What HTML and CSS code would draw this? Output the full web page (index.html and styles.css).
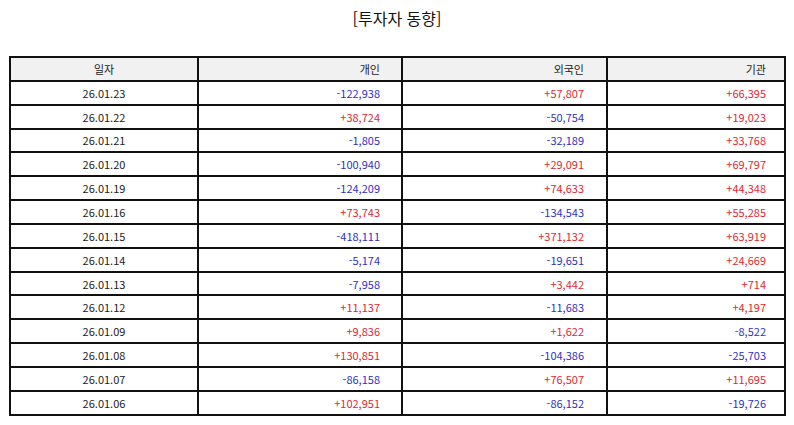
FILE: index.html
```html
<!DOCTYPE html>
<html lang="ko">
<head>
<meta charset="utf-8">
<link rel="stylesheet" href="styles.css">
</head>
<body>
<h1 class="title">[투자자 동향]</h1>
<table class="grid">
  <colgroup>
    <col class="c-date"><col class="c-ind"><col class="c-for"><col class="c-inst">
  </colgroup>
  <thead>
    <tr><th class="date">일자</th><th class="ind">개인</th><th class="for">외국인</th><th class="inst">기관</th></tr>
  </thead>
  <tbody>
    <tr><td class="date">26.01.23</td><td class="ind neg">-122,938</td><td class="for pos">+57,807</td><td class="inst pos">+66,395</td></tr>
    <tr><td class="date">26.01.22</td><td class="ind pos">+38,724</td><td class="for neg">-50,754</td><td class="inst pos">+19,023</td></tr>
    <tr><td class="date">26.01.21</td><td class="ind neg">-1,805</td><td class="for neg">-32,189</td><td class="inst pos">+33,768</td></tr>
    <tr><td class="date">26.01.20</td><td class="ind neg">-100,940</td><td class="for pos">+29,091</td><td class="inst pos">+69,797</td></tr>
    <tr><td class="date">26.01.19</td><td class="ind neg">-124,209</td><td class="for pos">+74,633</td><td class="inst pos">+44,348</td></tr>
    <tr><td class="date">26.01.16</td><td class="ind pos">+73,743</td><td class="for neg">-134,543</td><td class="inst pos">+55,285</td></tr>
    <tr><td class="date">26.01.15</td><td class="ind neg">-418,111</td><td class="for pos">+371,132</td><td class="inst pos">+63,919</td></tr>
    <tr><td class="date">26.01.14</td><td class="ind neg">-5,174</td><td class="for neg">-19,651</td><td class="inst pos">+24,669</td></tr>
    <tr><td class="date">26.01.13</td><td class="ind neg">-7,958</td><td class="for pos">+3,442</td><td class="inst pos">+714</td></tr>
    <tr><td class="date">26.01.12</td><td class="ind pos">+11,137</td><td class="for neg">-11,683</td><td class="inst pos">+4,197</td></tr>
    <tr><td class="date">26.01.09</td><td class="ind pos">+9,836</td><td class="for pos">+1,622</td><td class="inst neg">-8,522</td></tr>
    <tr><td class="date">26.01.08</td><td class="ind pos">+130,851</td><td class="for neg">-104,386</td><td class="inst neg">-25,703</td></tr>
    <tr><td class="date">26.01.07</td><td class="ind neg">-86,158</td><td class="for pos">+76,507</td><td class="inst pos">+11,695</td></tr>
    <tr><td class="date">26.01.06</td><td class="ind pos">+102,951</td><td class="for neg">-86,152</td><td class="inst neg">-19,726</td></tr>
  </tbody>
</table>
</body>
</html>
```
FILE: styles.css
```css
html, body {
  margin: 0;
  padding: 0;
  background: #ffffff;
}
body {
  font-family: "Noto Sans CJK KR", "Noto Sans", sans-serif;
  color: #222222;
  padding: 0 9px 0 9px;
}
.title {
  margin: 0;
  padding-top: 6px;
  height: 56px;
  box-sizing: border-box;
  text-align: center;
  font-size: 16px;
  font-weight: normal;
  line-height: 24px;
  color: #111111;
}
.grid {
  width: 775px;
  border-collapse: collapse;
  table-layout: fixed;
  font-size: 11px;
}
.c-date { width: 188px; }
.c-ind { width: 204px; }
.c-for { width: 205px; }
.c-inst { width: 178px; }
.grid tr {
  height: 23.85px;
}
.grid th, .grid td {
  border: 2px solid #111111;
  padding: 0;
  font-weight: normal;
  line-height: 14px;
}
.grid th {
  background: #f1f1f1;
  color: #222222;
}
.date { text-align: center; }
.ind, .for, .inst { text-align: right; }
.ind { padding-right: 21px !important; }
.for { padding-right: 22px !important; }
.inst { padding-right: 18px !important; }
.pos { color: #e4262f; }
.neg { color: #2f2fc8; }
```
